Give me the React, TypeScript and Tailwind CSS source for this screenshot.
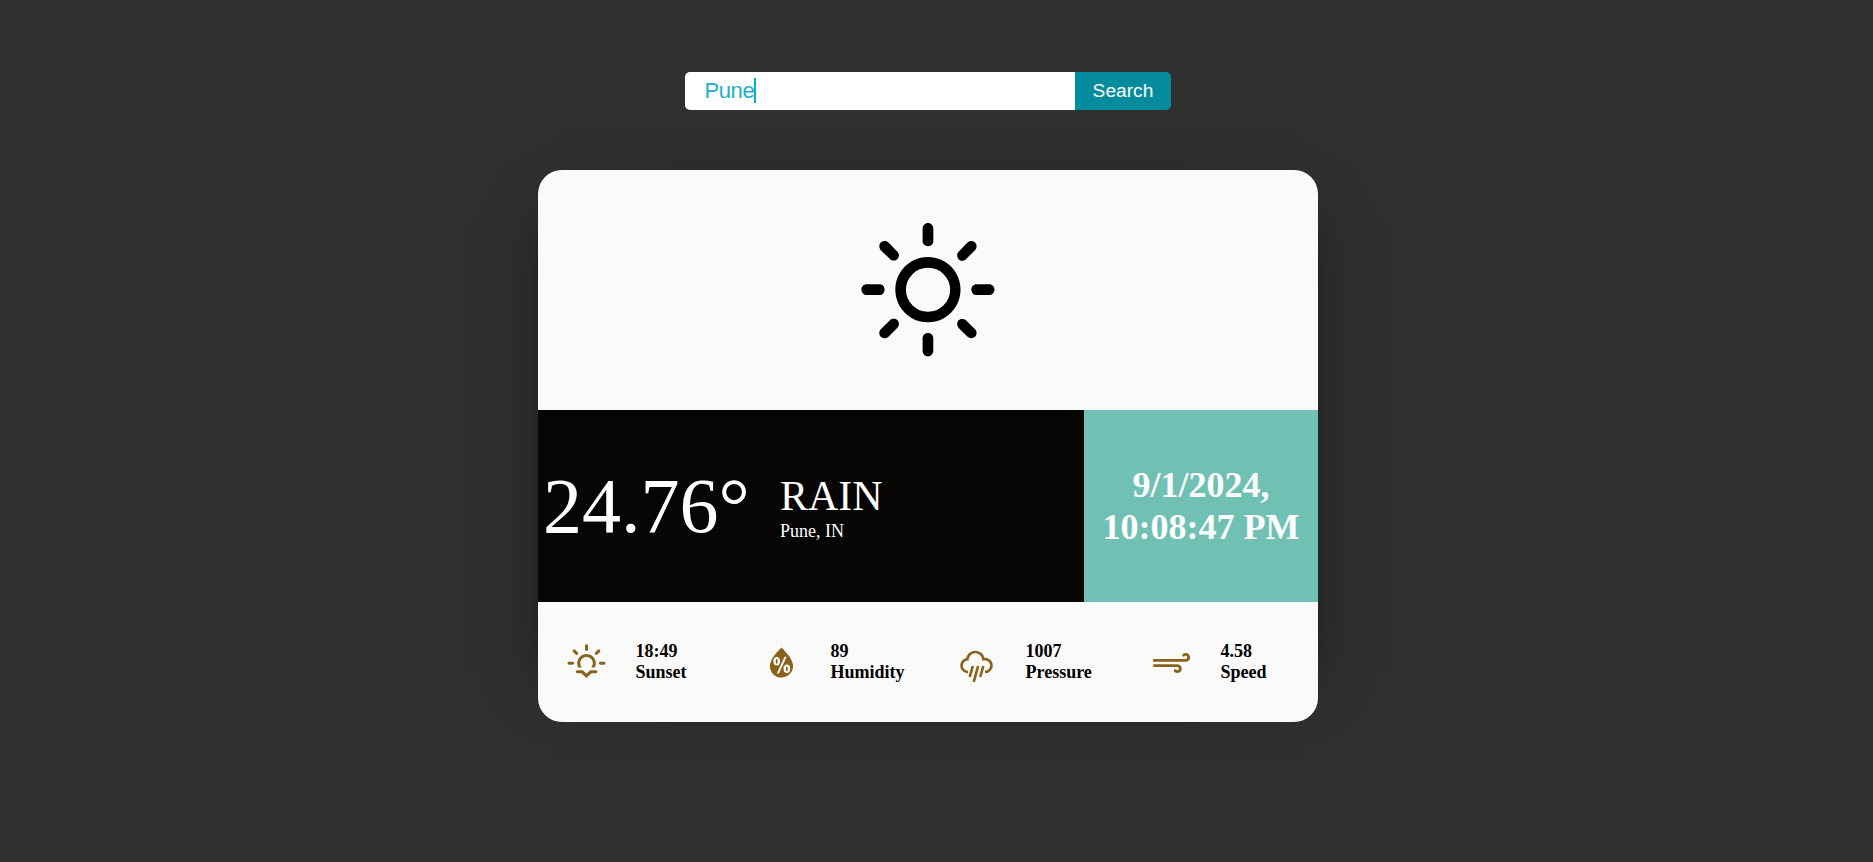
import { WiDaySunny, WiSunset, WiHumidity, WiRain, WiStrongWind } from "react-icons/wi";

const stats = [
  { Icon: WiSunset, value: "18:49", label: "Sunset" },
  { Icon: WiHumidity, value: "89", label: "Humidity" },
  { Icon: WiRain, value: "1007", label: "Pressure" },
  { Icon: WiStrongWind, value: "4.58", label: "Speed" },
];

export default function App() {
  return (
    <div className="flex h-[862px] flex-col items-center bg-[#2f2f2f] pr-[17px] pt-[72px] font-['Liberation_Serif',serif]">
      <div className="flex h-[38px] w-[486px] overflow-hidden rounded-[5px] font-['Liberation_Sans',sans-serif]">
        <div className="flex flex-1 items-center bg-white pb-px pl-[19.5px] text-[22px] tracking-[-0.4px] text-[#1cb0cb]">
          <span className="pb-px">Pune</span>
          <span className="h-[25px] w-0.5 bg-[#00b4cc]" />
        </div>
        <button className="w-24 bg-[#048c9e] text-[19.2px] text-white">Search</button>
      </div>
      <div className="mt-[60px] w-[780px] rounded-[24px] bg-[#fafafa] shadow-[34px_0_60px_-52px_rgba(0,0,0,0.66),-34px_0_60px_-52px_rgba(0,0,0,0.66)]">
        <div className="flex h-60 items-center justify-center pt-[4px]">
          <WiDaySunny size={188} color="#000" />
        </div>
        <div className="flex h-48">
          <div className="flex w-[70%] items-center bg-[#070604] text-white">
            <div className="w-[242px] pl-[5px] text-[78px] leading-none">24.76°</div>
            <div className="pt-[3px]">
              <div className="text-[42px] leading-[47px]">RAIN</div>
              <div className="text-[18px] leading-[23px]">Pune, IN</div>
            </div>
          </div>
          <div className="flex w-[30%] items-center justify-center bg-[#71c0b4] text-center text-[36px] leading-[42px] font-bold text-white">
            <div>
              9/1/2024,
              <br />
              10:08:47 PM
            </div>
          </div>
        </div>
        <div className="grid h-[120px] grid-cols-4">
          {stats.map(({ Icon, value, label }) => (
            <div key={label} className="flex items-center">
              <div className="flex w-[97px] justify-center">
                <Icon size={47} color="#8b621a" />
              </div>
              <div className="ml-[0.5px] text-[18px] leading-[21px] font-bold text-black">
                <div>{value}</div>
                <div>{label}</div>
              </div>
            </div>
          ))}
        </div>
      </div>
    </div>
  );
}
